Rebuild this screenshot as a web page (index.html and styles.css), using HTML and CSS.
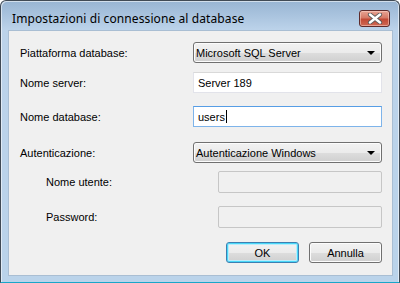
FILE: index.html
```html
<!DOCTYPE html>
<html lang="it">
<head>
<meta charset="utf-8">
<title>Impostazioni di connessione al database</title>
<link rel="stylesheet" href="styles.css">
</head>
<body>
<div class="window">
  <div class="titlebar">
    <span class="title">Impostazioni di connessione al database</span>
    <button class="close" aria-label="Chiudi">
      <svg width="18" height="11" viewBox="0 0 18 11">
        <path d="M4 1.5 L14 9.5 M14 1.5 L4 9.5" stroke="#5a5a5a" stroke-width="4.2" stroke-linecap="round"/>
        <path d="M4 1.5 L14 9.5 M14 1.5 L4 9.5" stroke="#ffffff" stroke-width="2.4" stroke-linecap="round"/>
      </svg>
    </button>
  </div>
  <div class="client">
    <div class="form">
      <label class="lbl">Piattaforma database:</label>
      <div class="combo"><span>Microsoft SQL Server</span><i class="arrow"></i></div>

      <label class="lbl">Nome server:</label>
      <div class="text">Server 189</div>

      <label class="lbl">Nome database:</label>
      <div class="text focus">users<span class="caret"></span></div>

      <label class="lbl">Autenticazione:</label>
      <div class="combo"><span>Autenticazione Windows</span><i class="arrow"></i></div>

      <label class="lbl sub">Nome utente:</label>
      <div class="text disabled"></div>

      <label class="lbl sub">Password:</label>
      <div class="text disabled"></div>
    </div>
    <div class="buttons">
      <button class="btn default">OK</button>
      <button class="btn">Annulla</button>
    </div>
  </div>
</div>
</body>
</html>
```

FILE: styles.css
```css
* { box-sizing: border-box; }
html, body { margin: 0; padding: 0; background: #ffffff; }
body { width: 400px; height: 283px; overflow: hidden; }

.window {
  width: 400px;
  height: 283px;
  border: 1px solid #404a55;
  border-bottom-color: #19a6c9;
  border-radius: 6px 6px 0 0;
  background: linear-gradient(to bottom, #98b5d3 0px, #a9c3de 14px, #bcd3ea 29px, #bad3ea 100%);
  display: flex;
  flex-direction: column;
  padding: 0 6px 6px 6px;
  box-shadow: inset 1px 1px 0 rgba(255,255,255,0.55), inset -1px 0 0 rgba(255,255,255,0.55);
}

.titlebar {
  height: 29px;
  display: flex;
  align-items: flex-start;
  justify-content: space-between;
  font-family: "Noto Sans", "Open Sans", sans-serif;
  font-size: 12px;
  color: #000;
}
.title { padding: 9px 0 0 5px; letter-spacing: 0.1px; }

.close {
  margin: 9px 3px 0 0;
  width: 31px;
  height: 17px;
  padding: 0;
  border: 1px solid #5e2b2b;
  border-radius: 3px;
  background: linear-gradient(to bottom, #e8a493 0%, #d67a67 45%, #c24a36 55%, #cf6a55 100%);
  box-shadow: inset 0 0 0 1px rgba(255,220,210,0.5);
  display: flex;
  align-items: center;
  justify-content: center;
}

.client {
  flex: 1;
  background: #f0f0f0;
  border: 1px solid #a9bed3;
  margin: 0 0 0 1px;
  padding: 11px 10px 0 10px;
  font-family: "Liberation Sans", Arial, sans-serif;
  font-size: 11px;
  color: #000;
}

.form {
  display: grid;
  grid-template-columns: 174px 189px;
  grid-template-rows: 30px 34px 36px 29px 35px 22px;
  align-items: start;
}
.lbl { height: 21px; display: flex; align-items: center; padding-left: 1px; }
.lbl.sub { padding-left: 27px; height: 22px; }

.combo {
  height: 21px;
  border: 1px solid #707070;
  border-radius: 3px;
  background: linear-gradient(to bottom, #f2f2f2 0%, #ebebeb 50%, #dddddd 51%, #cfcfcf 100%);
  box-shadow: inset 0 0 0 1px #fcfcfc;
  display: flex;
  align-items: center;
  justify-content: space-between;
  padding: 0 5px 0 2px;
}
.arrow {
  width: 0; height: 0;
  border-left: 4px solid transparent;
  border-right: 4px solid transparent;
  border-top: 4px solid #000;
  margin-right: 1px;
}

.text {
  height: 21px;
  border: 1px solid #e2e3ea;
  border-top-color: #abadb3;
  border-top-color: #d9d9d9;
  background: #fff;
  display: flex;
  align-items: center;
  padding-left: 4px;
}
.text.focus { border-color: #7eb4ea; border-top-color: #569de5; }
.caret { display: inline-block; width: 1px; height: 13px; background: #000; margin-left: 1px; }
.text.disabled {
  width: 164px;
  height: 22px;
  justify-self: end;
  background: #f0f0f0;
  border: 1px solid #c6c6c6;
  border-radius: 2px;
}

.buttons {
  display: flex;
  justify-content: flex-end;
  gap: 10px;
  margin-top: 14px;
  padding-right: 0;
}
.btn {
  width: 73px;
  height: 21px;
  font-family: "Liberation Sans", Arial, sans-serif;
  font-size: 11px;
  color: #000;
  border: 1px solid #707070;
  border-radius: 3px;
  background: linear-gradient(to bottom, #f2f2f2 0%, #ebebeb 50%, #dddddd 51%, #cfcfcf 100%);
  box-shadow: inset 0 0 0 1px #fcfcfc;
  padding: 0;
}
.btn.default {
  border-color: #3c7fb1;
  box-shadow: inset 0 0 0 1px #48d7f8, inset 0 0 0 2px #b9ecfb;
}
```
